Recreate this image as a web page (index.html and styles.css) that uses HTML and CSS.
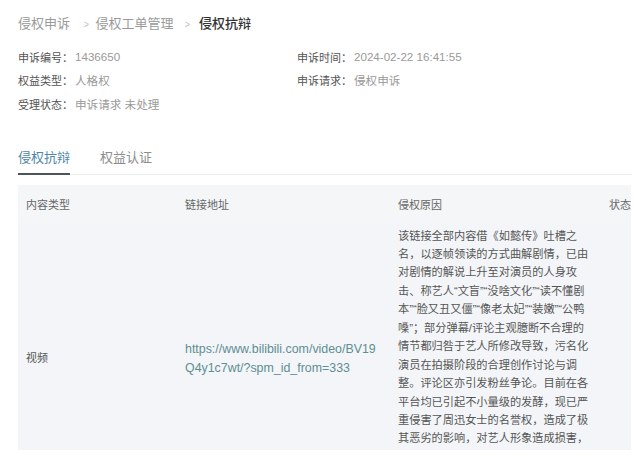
FILE: index.html
```html
<!DOCTYPE html>
<html lang="zh-CN">
<head>
<meta charset="utf-8">
<title>侵权抗辩</title>
<link rel="stylesheet" href="styles.css">
</head>
<body>
<div class="page">
  <nav class="crumbs">
    <span class="crumb">侵权申诉</span>
    <span class="sep">&gt;</span>
    <span class="crumb">侵权工单管理</span>
    <span class="sep">&gt;</span>
    <span class="crumb current">侵权抗辩</span>
  </nav>

  <div class="info">
    <div class="field"><span class="label">申诉编号：</span><span class="value">1436650</span></div>
    <div class="field"><span class="label">申诉时间：</span><span class="value">2024-02-22 16:41:55</span></div>
    <div class="field"><span class="label">权益类型：</span><span class="value">人格权</span></div>
    <div class="field"><span class="label">申诉请求：</span><span class="value">侵权申诉</span></div>
    <div class="field"><span class="label">受理状态：</span><span class="value">申诉请求 未处理</span></div>
  </div>

  <div class="tabs">
    <div class="tab active">侵权抗辩</div>
    <div class="tab">权益认证</div>
  </div>

  <div class="table">
    <div class="row head">
      <div class="cell c1">内容类型</div>
      <div class="cell c2">链接地址</div>
      <div class="cell c3">侵权原因</div>
      <div class="cell c4">状态</div>
    </div>
    <div class="row body">
      <div class="cell c1">视频</div>
      <div class="cell c2 link">https://www.bilibili.com/video/BV19<br>Q4y1c7wt/?spm_id_from=333</div>
      <div class="cell c3 reason">该链接全部内容借《如懿传》吐槽之<br>名，以逐帧领读的方式曲解剧情，已由<br>对剧情的解说上升至对演员的人身攻<br>击、称艺人“文盲”“没啥文化”“读不懂剧<br>本”“脸又丑又僵”“像老太妃”“装嫩”“公鸭<br>嗓”；部分弹幕/评论主观臆断不合理的<br>情节都归咎于艺人所修改导致，污名化<br>演员在拍摄阶段的合理创作讨论与调<br>整。评论区亦引发粉丝争论。目前在各<br>平台均已引起不小量级的发酵，现已严<br>重侵害了周迅女士的名誉权，造成了极<br>其恶劣的影响，对艺人形象造成损害，</div>
      <div class="cell c4"></div>
    </div>
  </div>
</div>
</body>
</html>
```

FILE: styles.css
```css
* { box-sizing: border-box; }

html, body {
  margin: 0;
  padding: 0;
  background: #ffffff;
}

body {
  font-family: "Liberation Sans", "Noto Sans CJK SC", sans-serif;
  color: #555;
  overflow: hidden;
}

.page {
  width: 640px;
  height: 461px;
  padding: 14px 0 0 18px;
  overflow: hidden;
}

.crumbs {
  display: flex;
  align-items: center;
  height: 20px;
  font-size: 13px;
  line-height: 20px;
}

.crumb { color: #9a9a9a; }
.crumb.current { color: #333; font-weight: 500; }

.sep {
  color: #c2c2c2;
  font-size: 11px;
  margin: 0 6px 0 13px;
  transform: scaleX(0.8);
}

.sep + .crumb + .sep {
  margin: 0 8px 0 11px;
}

.info {
  display: grid;
  grid-template-columns: 279px 1fr;
  margin-top: 11px;
  font-size: 11px;
}

.field {
  display: flex;
  align-items: center;
  height: 23.5px;
}

.label { color: #555; }
.value { color: #9a9a9a; font-size: 11.6px; margin-left: 2px; }

.tabs {
  display: flex;
  margin-top: 31px;
  width: 614px;
  border-bottom: 1px solid #eceef1;
  font-size: 13px;
}

.tab {
  color: #8d8d8d;
  line-height: 22px;
  padding-bottom: 4px;
  margin-right: 30px;
  border-bottom: 2px solid transparent;
  margin-bottom: -1px;
}

.tab.active {
  color: #4e86a8;
  border-bottom-color: #4c545c;
}

.table {
  margin-top: 10px;
  width: 613px;
  height: 265px;
  overflow: hidden;
  background: #f3f5f8;
  font-size: 11px;
}

.row {
  display: flex;
}

.row.head {
  height: 38px;
  align-items: center;
  color: #666;
  background: #f4f6f8;
}

.row.body {
  height: 272px;
  align-items: center;
  line-height: 18.45px;
}

.cell { flex: none; white-space: nowrap; }
.c1 { width: 167px; padding-left: 8px; }
.c2 { width: 213px; }
.c3 { width: 211px; }
.c4 { width: 22px; }

.link {
  color: #5e8f93;
  font-size: 12.4px;
}

.reason {
  align-self: flex-start;
  padding-top: 4px;
  font-size: 11.2px;
  color: #555;
}
```
